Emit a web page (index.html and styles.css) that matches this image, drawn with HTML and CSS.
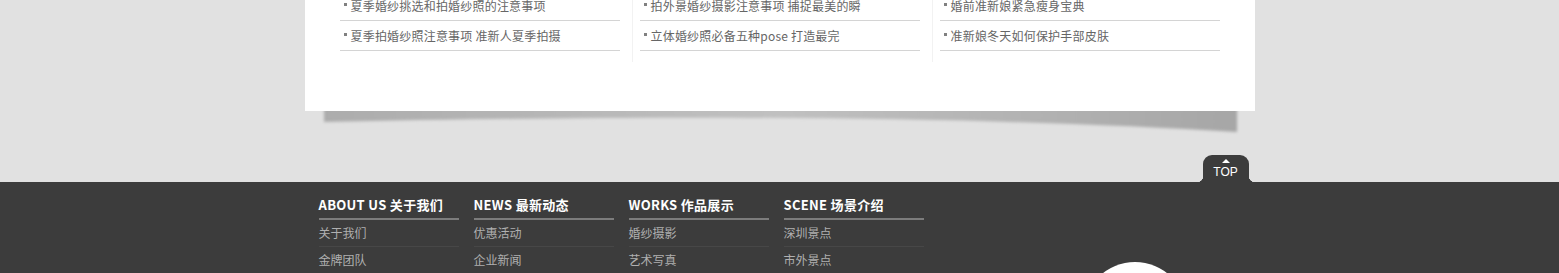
FILE: index.html
```html
<!DOCTYPE html>
<html lang="zh-CN">
<head>
  <meta charset="UTF-8">
  <meta name="viewport" content="width=device-width, initial-scale=1.0">
  <title>婚纱摄影</title>
  <link rel="stylesheet" href="styles.css">
</head>
<body>
  <div class="news-box">
    <div class="news-cols">
      <ul class="news-col">
        <li><a href="#">夏季婚纱挑选和拍婚纱照的注意事项</a></li>
        <li><a href="#">夏季拍婚纱照注意事项 准新人夏季拍摄</a></li>
      </ul>
      <ul class="news-col">
        <li><a href="#">拍外景婚纱摄影注意事项 捕捉最美的瞬</a></li>
        <li><a href="#">立体婚纱照必备五种pose 打造最完</a></li>
      </ul>
      <ul class="news-col last">
        <li><a href="#">婚前准新娘紧急瘦身宝典</a></li>
        <li><a href="#">准新娘冬天如何保护手部皮肤</a></li>
      </ul>
    </div>
  </div>

  <div class="box-shadow">
    <svg width="950" height="71" viewBox="0 0 950 71">
      <defs>
        <filter id="soft" x="-5%" y="-50%" width="110%" height="200%">
          <feGaussianBlur stdDeviation="1.6"/>
        </filter>
        <linearGradient id="shade" x1="0" y1="0" x2="1" y2="0">
          <stop offset="0" stop-color="#acacac"/>
          <stop offset="0.5" stop-color="#c0c0c0"/>
          <stop offset="1" stop-color="#a6a6a6"/>
        </linearGradient>
      </defs>
      <path d="M19,-4 H932 V21 C720,8 430,2 19,11 Z" fill="url(#shade)" filter="url(#soft)"/>
    </svg>
  </div>

  <div class="footer">
    <div class="footer-inner">
      <a class="to-top" href="#"><span class="arrow"></span>TOP</a>

      <div class="foot-col">
        <h3>ABOUT US 关于我们</h3>
        <a href="#">关于我们</a>
        <a href="#">金牌团队</a>
      </div>
      <div class="foot-col">
        <h3>NEWS 最新动态</h3>
        <a href="#">优惠活动</a>
        <a href="#">企业新闻</a>
      </div>
      <div class="foot-col">
        <h3>WORKS 作品展示</h3>
        <a href="#">婚纱摄影</a>
        <a href="#">艺术写真</a>
      </div>
      <div class="foot-col">
        <h3>SCENE 场景介绍</h3>
        <a href="#">深圳景点</a>
        <a href="#">市外景点</a>
      </div>

      <div class="foot-logo"></div>
    </div>
  </div>
</body>
</html>
```

FILE: styles.css
```css
body {
  margin: 0;
  background: #e1e1e1;
  font-family: "Noto Sans CJK SC", "Noto Sans", sans-serif;
}

ul {
  margin: 0;
  padding: 0;
  list-style: none;
}

a {
  text-decoration: none;
}

/* news block */
.news-box {
  position: relative;
  z-index: 1;
  width: 950px;
  margin: 0 auto;
  padding-bottom: 49px;
  background: #fff;
}

.news-cols {
  display: flex;
  margin-top: -9px;
  padding-left: 35px;
}

.news-col {
  width: 280px;
  padding: 0 12px 11px 7px;
  border-right: 1px solid #f2f2f2;
}

.news-col:first-child {
  padding-left: 0;
}

.news-col.last {
  border-right: none;
}

.news-col li {
  height: 29px;
  line-height: 29px;
  border-bottom: 1px solid #d4d4d4;
  font-size: 12px;
  white-space: nowrap;
  overflow: hidden;
}

.news-col li a {
  display: block;
  padding-left: 11px;
  color: #666;
  letter-spacing: 0.2px;
  position: relative;
}

.news-col li a::before {
  content: "";
  position: absolute;
  left: 4px;
  top: 12px;
  width: 3px;
  height: 3px;
  background: #808080;
}

.box-shadow {
  width: 950px;
  height: 71px;
  margin: 0 auto;
}

.box-shadow svg {
  display: block;
}

/* footer */
.footer {
  min-height: 200px;
  background: #3c3c3c;
}

.footer-inner {
  position: relative;
  display: flex;
  align-items: flex-start;
  width: 936px;
  margin: 0 auto;
  padding: 12px 0 0 14px;
}

.to-top {
  position: absolute;
  top: -27px;
  left: 898px;
  width: 46px;
  height: 23px;
  padding-top: 4px;
  border-radius: 9px 9px 0 0;
  background: #3c3c3c;
  color: #fff;
  font-family: "Liberation Sans", Arial, sans-serif;
  font-size: 12px;
  line-height: 14px;
  text-align: center;
}

.to-top::before,
.to-top::after {
  content: "";
  position: absolute;
  bottom: 0;
  width: 6px;
  height: 6px;
}

.to-top::before {
  left: -6px;
  background: radial-gradient(circle at 0 0, transparent 6px, #3c3c3c 6.5px);
}

.to-top::after {
  right: -6px;
  background: radial-gradient(circle at 100% 0, transparent 6px, #3c3c3c 6.5px);
}

.to-top .arrow {
  display: block;
  width: 0;
  height: 0;
  margin: 0 auto 2px;
  border-left: 4px solid transparent;
  border-right: 4px solid transparent;
  border-bottom: 4px solid #fff;
}

.foot-col {
  width: 140px;
  margin-right: 15px;
}

.foot-col h3 {
  margin: 0;
  padding-bottom: 2px;
  border-bottom: 2px solid #7c7c7c;
  color: #fff;
  font-size: 13px;
  font-weight: bold;
  line-height: 22px;
  letter-spacing: 0.3px;
  white-space: nowrap;
}

.foot-col a {
  display: block;
  height: 26px;
  line-height: 26px;
  border-bottom: 1px solid #474747;
  color: #b0b0b0;
  font-size: 12px;
}

.foot-logo {
  width: 104px;
  height: 104px;
  margin: 68px 0 0 144px;
  border-radius: 50%;
  background: #fff;
}
```
